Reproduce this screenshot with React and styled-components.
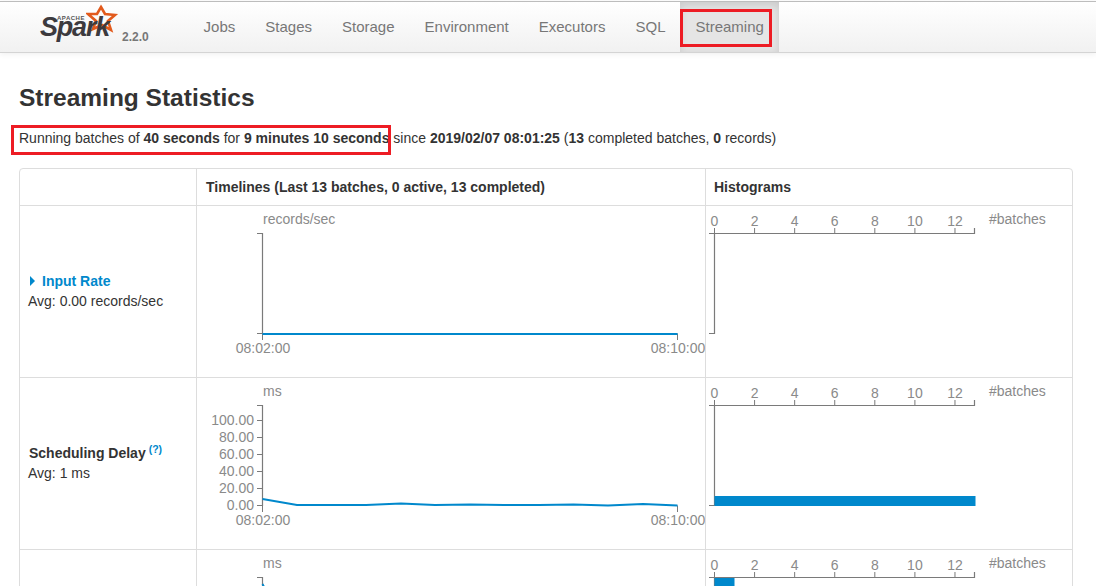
import React from 'react'
import styled, { createGlobalStyle } from 'styled-components'

const GlobalStyle = createGlobalStyle`
html, body {
    margin: 0;
    height: 100%;
    overflow: hidden;
    background: #fff;
    font-family: "Liberation Sans", Arial, sans-serif;
    font-size: 14px;
    color: #333;
}
`

const TopBar = styled.div`
    height: 52px;
    margin-top: 1px;
    border-top: 1px solid #bdbdbd;
    border-bottom: 1px solid #d4d4d4;
    background: linear-gradient(to bottom, #ffffff, #f1f1f1);
    box-shadow: 0 1px 6px rgba(0, 0, 0, 0.07);
    display: flex;
    box-sizing: border-box;
`

const Brand = styled.div`
    width: 188.6px;
    position: relative;
    flex-shrink: 0;
`

const BrandWord = styled.span`
    position: absolute;
    left: 40px;
    top: 9px;
    font-size: 27px;
    line-height: 32px;
    font-weight: 700;
    font-style: italic;
    letter-spacing: -1.2px;
    color: #3c3a3e;
`

const BrandApache = styled.span`
    position: absolute;
    left: 57px;
    top: 13px;
    font-size: 6px;
    line-height: 6px;
    font-weight: 700;
    letter-spacing: 0.5px;
    color: #555;
`

const BrandStar = styled.svg`
    position: absolute;
    left: 86px;
    top: 2px;
`

const BrandVersion = styled.span`
    position: absolute;
    left: 122px;
    top: 28px;
    font-size: 12px;
    line-height: 14px;
    font-weight: 700;
    color: #777;
`

const NavList = styled.div`
    display: flex;
`

const NavItem = styled.a`
    display: block;
    padding: 0 15px;
    line-height: 50px;
    height: 50px;
    font-size: 15px;
    color: #777;
    background: ${(p) => (p.$active ? '#e5e5e5' : 'transparent')};
    box-shadow: ${(p) => (p.$active ? 'inset 0 3px 8px rgba(0, 0, 0, 0.125)' : 'none')};
    position: relative;
`

const NavMark = styled.span`
    position: absolute;
    left: 0;
    top: 7px;
    width: 92px;
    height: 38px;
    box-sizing: border-box;
    border: 3px solid #ed1c24;
`

const Page = styled.div`
    padding: 0 23px 0 19px;
`

const Title = styled.h3`
    margin: 30px 0 0;
    font-size: 24.5px;
    line-height: 30px;
    font-weight: 700;
`

const Summary = styled.p`
    margin: 15px 0 0;
    line-height: 20px;
    white-space: nowrap;
`

const Marked = styled.span`
    position: relative;
    &::after {
        content: '';
        position: absolute;
        left: -8px;
        top: -5px;
        width: 380px;
        height: 30px;
        box-sizing: border-box;
        border: 3px solid #ed1c24;
    }
`

const Table = styled.div`
    margin-top: 20px;
    border: 1px solid #ddd;
    border-radius: 4px;
    display: grid;
    grid-template-columns: 176px 509px 1fr;
    grid-auto-rows: 172px;
    grid-template-rows: 36px;
`

const Head = styled.div`
    border-left: ${(p) => (p.$first ? 'none' : '1px solid #ddd')};
    padding: 0 ${(p) => p.$pad || 9}px;
    line-height: 36px;
    font-weight: 700;
`

const Label = styled.div`
    border-top: 1px solid #ddd;
    padding: 0 8px 2px;
    display: flex;
    flex-direction: column;
    justify-content: center;
    line-height: 20px;
`

const Name = styled.div`
    font-weight: 700;
    padding-left: 1px;
    color: ${(p) => (p.$link ? '#0088cc' : '#333')};
    display: flex;
    align-items: center;
`

const Arrow = styled.span`
    width: 0;
    height: 0;
    margin: 0 7px 0 1px;
    border-left: 5px solid #0088cc;
    border-top: 5px solid transparent;
    border-bottom: 5px solid transparent;
`

const Help = styled.sup`
    font-size: 10.5px;
    line-height: 10px;
    color: #0088cc;
    margin-left: 3px;
    align-self: flex-start;
    margin-top: 1px;
`

const ChartCell = styled.div`
    border-top: 1px solid #ddd;
    border-left: 1px solid #ddd;
    overflow: hidden;
`

const ChartSvg = styled.svg`
    display: block;
    font-family: "Liberation Sans", Arial, sans-serif;
    font-size: 14px;
    text {
        fill: #8a8a8a;
    }
`

const axis = '#7a7a7a'
const blue = '#0088cc'

// coordinates are relative to the cell, left edge of the timeline cell is x=197 on the page
function Timeline({ unit, ticks = [], line, height = 171 }) {
    return (
        <ChartSvg width="508" height={height}>
            <text x="66" y="18">{unit}</text>
            <path d="M60 27.5H65.5V127.5H60" fill="none" stroke={axis} strokeWidth="1.2" />
            {ticks.map(([label, y]) => (
                <g key={label}>
                    <path d={`M60 ${y + 0.5}H65`} stroke={axis} />
                    <text x="57" y={y + 5} textAnchor="end">{label}</text>
                </g>
            ))}
            <path d="M65.5 127.5V134M480.5 127.5V134" fill="none" stroke={axis} />
            <text x="66" y="147" textAnchor="middle">08:02:00</text>
            <text x="481" y="147" textAnchor="middle">08:10:00</text>
            <polyline points={line} fill="none" stroke={blue} strokeWidth="2" />
        </ChartSvg>
    )
}

function Histogram({ bar }) {
    const xs = [0, 2, 4, 6, 8, 10, 12]
    return (
        <ChartSvg width="367" height="171">
            {xs.map((n) => (
                <g key={n}>
                    <text x={8.5 + n * 20.04} y="19.5" textAnchor="middle">{n}</text>
                    <path d={`M${8.5 + n * 20.04} 22V27`} stroke={axis} />
                </g>
            ))}
            <text x="283" y="18">#batches</text>
            <path d="M3 27.5H268.5V22M8.5 27.5V127.5H3" fill="none" stroke={axis} strokeWidth="1.2" />
            {bar && <rect x="8.5" y={bar.y} width={bar.w} height={bar.h} fill={blue} />}
        </ChartSvg>
    )
}

const flatLine = '65.5,128 480.5,128'
const delayLine = '65.5,121 100,127 134.6,127 169,127 204,125.5 238,127 273,126.5 307,127 342,127 376.5,126.5 411,127.5 446,126 480.5,127.5'
const delayTicks = [['100.00', 42], ['80.00', 59], ['60.00', 76], ['40.00', 93], ['20.00', 110], ['0.00', 127]]
const procLine = '65.5,34 100,100 134.6,110 169,112 204,112 238,112 273,112 307,112 342,112 376.5,112 411,112 446,112 480.5,112'

export default function App() {
    return (
        <>
            <GlobalStyle />
            <TopBar>
                <Brand>
                    <BrandStar width="34" height="34" viewBox="0 0 34 34">
                        <path
                            d="M15 3L19 10L29 11L22 17L25 26L16 21L7 25L10 17L2 10L11 10Z"
                            fill="none"
                            stroke="#e25a1c"
                            strokeWidth="2.6"
                            strokeLinejoin="miter"
                        />
                    </BrandStar>
                    <BrandWord>Spark</BrandWord>
                    <BrandApache>APACHE</BrandApache>
                    <BrandVersion>2.2.0</BrandVersion>
                </Brand>
                <NavList>
                    <NavItem>Jobs</NavItem>
                    <NavItem>Stages</NavItem>
                    <NavItem>Storage</NavItem>
                    <NavItem>Environment</NavItem>
                    <NavItem>Executors</NavItem>
                    <NavItem>SQL</NavItem>
                    <NavItem $active>
                        Streaming
                        <NavMark />
                    </NavItem>
                </NavList>
            </TopBar>
            <Page>
                <Title>Streaming Statistics</Title>
                <Summary>
                    <Marked>
                        Running batches of <b>40 seconds</b> for <b>9 minutes 10 seconds</b>
                    </Marked>{' '}
                    since <b>2019/02/07 08:01:25</b> (<b>13</b> completed batches, <b>0</b> records)
                </Summary>
                <Table>
                    <Head $first />
                    <Head>Timelines (Last 13 batches, 0 active, 13 completed)</Head>
                    <Head $pad={8}>Histograms</Head>

                    <Label>
                        <Name $link><Arrow />Input Rate</Name>
                        <div>Avg: 0.00 records/sec</div>
                    </Label>
                    <ChartCell><Timeline unit="records/sec" line={flatLine} /></ChartCell>
                    <ChartCell><Histogram /></ChartCell>

                    <Label>
                        <Name>Scheduling Delay <Help>(?)</Help></Name>
                        <div>Avg: 1 ms</div>
                    </Label>
                    <ChartCell><Timeline unit="ms" ticks={delayTicks} line={delayLine} /></ChartCell>
                    <ChartCell><Histogram bar={{ y: 118, w: 261, h: 10 }} /></ChartCell>

                    {/* third row is below the fold in the screenshot, its label can't be read */}
                    <Label />
                    <ChartCell><Timeline unit="ms" line={procLine} /></ChartCell>
                    <ChartCell><Histogram bar={{ y: 28, w: 20, h: 10 }} /></ChartCell>
                </Table>
            </Page>
        </>
    )
}
